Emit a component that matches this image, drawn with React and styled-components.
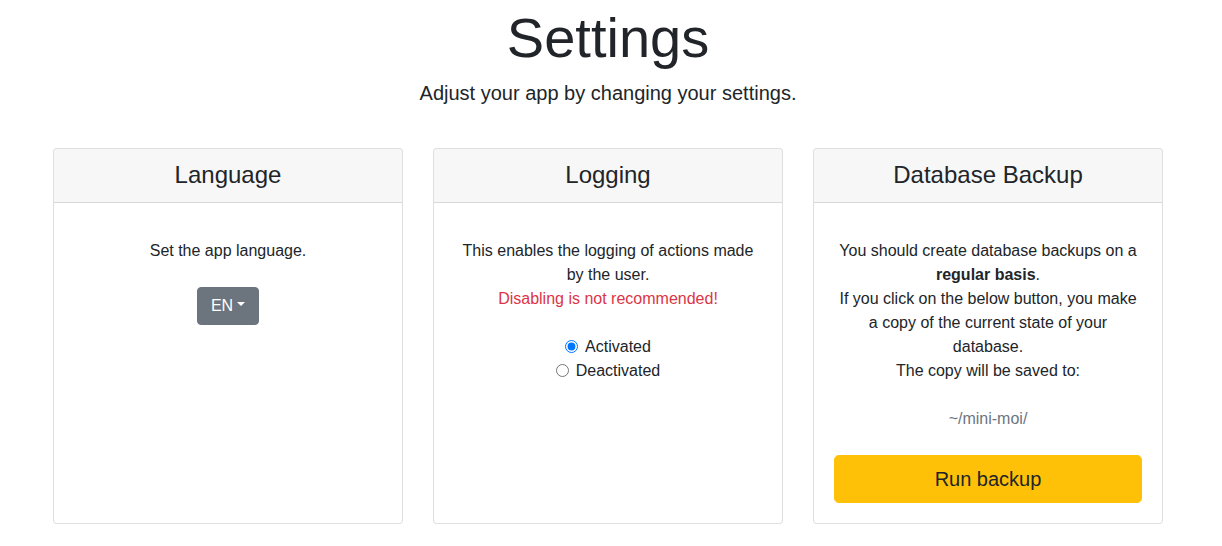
import React, { useState } from 'react';
import styled, { createGlobalStyle } from 'styled-components';

const GlobalStyle = createGlobalStyle`
    body {
        margin: 0;
        font-family: "Liberation Sans", Arial, sans-serif;
        font-size: 16px;
        line-height: 1.5;
        color: #212529;
        background: #fff;
    }
`;

const Page = styled.div`
    display: flex;
    justify-content: center;
    padding-right: 6px;
`;

const Container = styled.div`
    width: 1110px;
    text-align: center;
`;

const Title = styled.h1`
    margin: 4px 0 7px;
    font-size: 56px;
    font-weight: 300;
    line-height: 1.2;
`;

const Lead = styled.p`
    margin: 0 0 40px;
    font-size: 20px;
    font-weight: 300;
    line-height: 1.5;
`;

const Row = styled.div`
    display: grid;
    grid-template-columns: repeat(3, 1fr);
    gap: 30px;
`;

const Card = styled.div`
    display: flex;
    flex-direction: column;
    border: 1px solid rgba(0, 0, 0, 0.125);
    border-radius: 4px;
    background: #fff;
    overflow: hidden;
`;

const CardHeader = styled.h4`
    margin: 0;
    padding: 12px 20px;
    font-size: 24px;
    font-weight: 400;
    line-height: 1.2;
    background: rgba(0, 0, 0, 0.03);
    border-bottom: 1px solid rgba(0, 0, 0, 0.125);
`;

const CardBody = styled.div`
    flex: 1;
    padding: 36px 20px 20px;
    display: flex;
    flex-direction: column;
    align-items: stretch;
`;

const Text = styled.p`
    margin: 0 0 ${(p) => p.$gap || 24}px;
    color: ${(p) => (p.$muted ? '#6c757d' : '#212529')};
`;

const Danger = styled.span`
    display: block;
    color: #dc3545;
`;

const DropdownButton = styled.button`
    align-self: center;
    display: inline-flex;
    align-items: center;
    padding: 6px 13px;
    font-family: inherit;
    font-size: 16px;
    line-height: 1.5;
    color: #fff;
    background: #6c757d;
    border: 1px solid #6c757d;
    border-radius: 4px;
    cursor: pointer;

    &::after {
        content: '';
        display: inline-block;
        margin-left: 4px;
        margin-top: -3px;
        border-top: 4.8px solid;
        border-right: 4.8px solid transparent;
        border-left: 4.8px solid transparent;
    }
`;

const RadioGroup = styled.div`
    display: flex;
    flex-direction: column;
    align-items: center;
`;

const RadioLabel = styled.label`
    display: inline-flex;
    align-items: center;
    cursor: pointer;

    input {
        margin: 0 7px 0 0;
        width: 13px;
        height: 13px;
    }
`;

const RunButton = styled.button`
    padding: 8px 16px;
    font-family: inherit;
    font-size: 20px;
    line-height: 1.5;
    color: #212529;
    background: #ffc107;
    border: 1px solid #ffc107;
    border-radius: 4.8px;
    cursor: pointer;
`;

export default function App() {
    const [logging, setLogging] = useState('on');

    return (
        <Page>
            <GlobalStyle />
            <Container>
                <Title>Settings</Title>
                <Lead>Adjust your app by changing your settings.</Lead>
                <Row>
                    <Card>
                        <CardHeader>Language</CardHeader>
                        <CardBody>
                            <Text $gap={24}>Set the app language.</Text>
                            <DropdownButton>EN</DropdownButton>
                        </CardBody>
                    </Card>
                    <Card>
                        <CardHeader>Logging</CardHeader>
                        <CardBody>
                            <Text>
                                This enables the logging of actions made by the user.
                                <Danger>Disabling is not recommended!</Danger>
                            </Text>
                            <RadioGroup>
                                <RadioLabel>
                                    <input
                                        type="radio"
                                        name="logging"
                                        checked={logging === 'on'}
                                        onChange={() => setLogging('on')}
                                    />
                                    Activated
                                </RadioLabel>
                                <RadioLabel>
                                    <input
                                        type="radio"
                                        name="logging"
                                        checked={logging === 'off'}
                                        onChange={() => setLogging('off')}
                                    />
                                    Deactivated
                                </RadioLabel>
                            </RadioGroup>
                        </CardBody>
                    </Card>
                    <Card>
                        <CardHeader>Database Backup</CardHeader>
                        <CardBody>
                            <Text>
                                You should create database backups on a <b>regular basis</b>.
                                <br />
                                If you click on the below button, you make a copy of the current
                                state of your database.
                                <br />
                                The copy will be saved to:
                            </Text>
                            <Text $muted $gap={24}>~/mini-moi/</Text>
                            <RunButton>Run backup</RunButton>
                        </CardBody>
                    </Card>
                </Row>
            </Container>
        </Page>
    );
}
